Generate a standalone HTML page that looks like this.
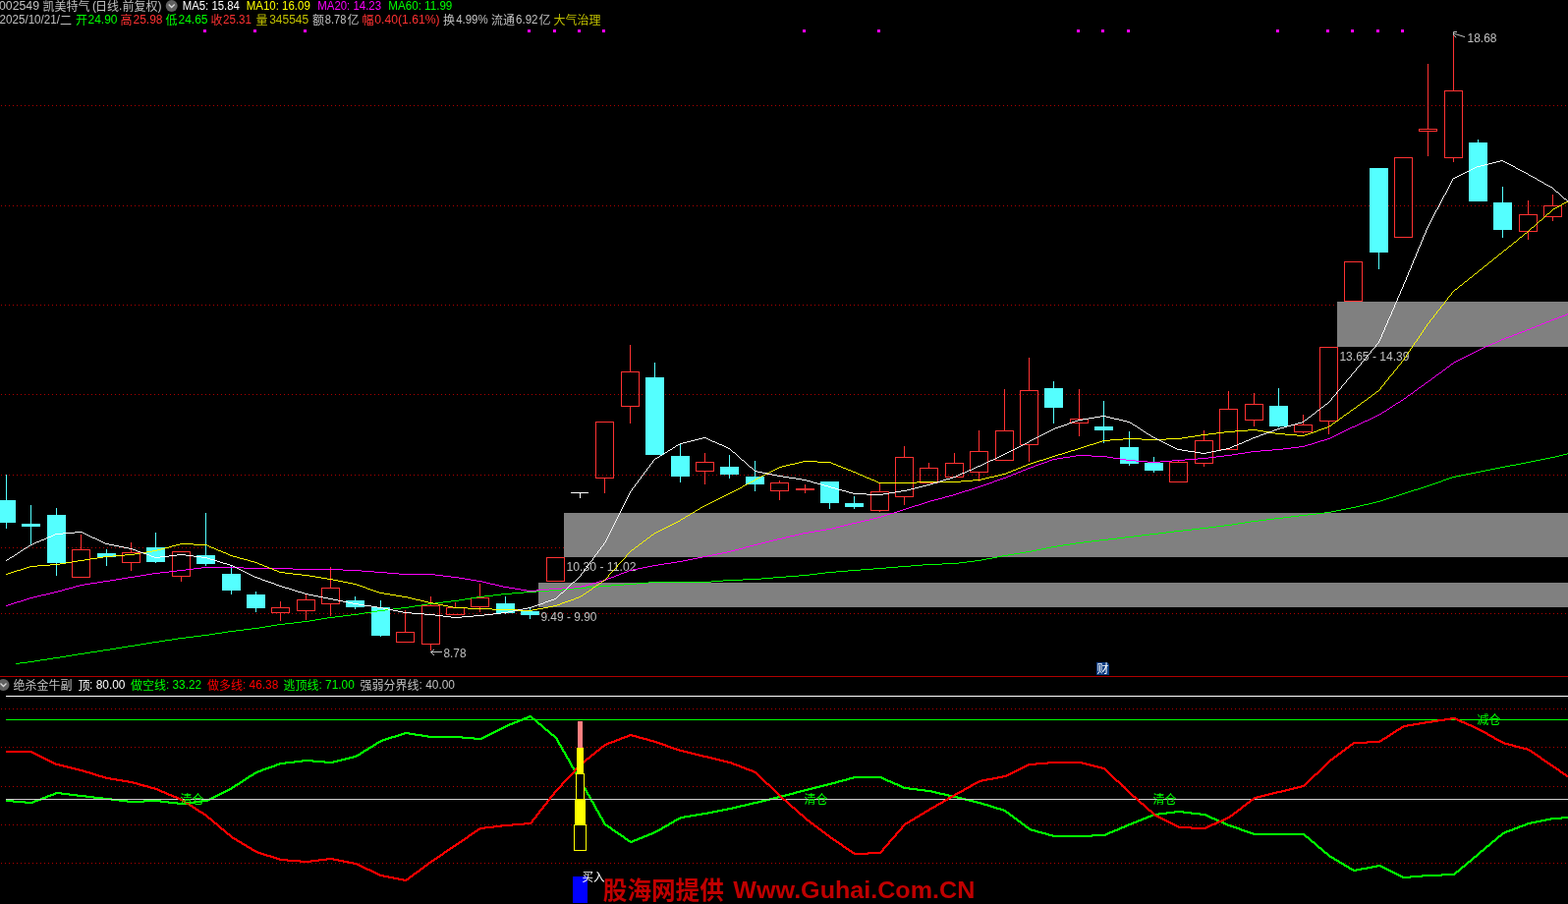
<!DOCTYPE html>
<html lang="zh"><head><meta charset="utf-8"><title>002549 凯美特气 日线</title>
<style>
html,body{margin:0;padding:0;background:#000;overflow:hidden}
body{width:1596px;height:920px;font-family:"Liberation Sans","Noto Sans CJK SC",sans-serif}
svg{display:block}
svg text{font-family:"Liberation Sans","Noto Sans CJK SC",sans-serif;white-space:pre}
</style></head><body>
<svg width="1596" height="920" viewBox="0 0 1596 920">
<defs><filter id="gs" x="0" y="0" width="100%" height="100%" filterUnits="userSpaceOnUse" color-interpolation-filters="sRGB"><feOffset dx="0" dy="0"/></filter></defs>
<rect width="1596" height="920" fill="#000"/>
<g shape-rendering="crispEdges"><line x1="1" y1="107.5" x2="1596" y2="107.5" stroke="#B00000" stroke-width="1" stroke-dasharray="1 3"/><line x1="1" y1="209.5" x2="1596" y2="209.5" stroke="#B00000" stroke-width="1" stroke-dasharray="1 3"/><line x1="1" y1="310.5" x2="1596" y2="310.5" stroke="#B00000" stroke-width="1" stroke-dasharray="1 3"/><line x1="1" y1="401.5" x2="1596" y2="401.5" stroke="#B00000" stroke-width="1" stroke-dasharray="1 3"/><line x1="1" y1="483.5" x2="1596" y2="483.5" stroke="#B00000" stroke-width="1" stroke-dasharray="1 3"/><line x1="1" y1="557.5" x2="1596" y2="557.5" stroke="#B00000" stroke-width="1" stroke-dasharray="1 3"/><line x1="1" y1="624.5" x2="1596" y2="624.5" stroke="#B00000" stroke-width="1" stroke-dasharray="1 3"/><line x1="1" y1="721.5" x2="1596" y2="721.5" stroke="#B00000" stroke-width="1" stroke-dasharray="1 3"/><line x1="1" y1="760.5" x2="1596" y2="760.5" stroke="#B00000" stroke-width="1" stroke-dasharray="1 3"/><line x1="1" y1="800.5" x2="1596" y2="800.5" stroke="#B00000" stroke-width="1" stroke-dasharray="1 3"/><line x1="1" y1="839.5" x2="1596" y2="839.5" stroke="#B00000" stroke-width="1" stroke-dasharray="1 3"/><line x1="1" y1="878.5" x2="1596" y2="878.5" stroke="#B00000" stroke-width="1" stroke-dasharray="1 3"/><rect x="0" y="688" width="1596" height="1" fill="#B00000"/><rect x="6" y="708" width="1590" height="1" fill="#FFFFFF"/><rect x="574" y="522" width="1022" height="45" fill="#808080"/><rect x="548" y="593" width="1048" height="25" fill="#808080"/><rect x="1361" y="307" width="235" height="46" fill="#808080"/><rect x="207" y="30" width="3" height="3" fill="#FF00FF"/><rect x="258" y="30" width="3" height="3" fill="#FF00FF"/><rect x="309" y="30" width="3" height="3" fill="#FF00FF"/><rect x="537" y="30" width="3" height="3" fill="#FF00FF"/><rect x="563" y="30" width="3" height="3" fill="#FF00FF"/><rect x="588" y="30" width="3" height="3" fill="#FF00FF"/><rect x="613" y="30" width="3" height="3" fill="#FF00FF"/><rect x="817" y="30" width="3" height="3" fill="#FF00FF"/><rect x="893" y="30" width="3" height="3" fill="#FF00FF"/><rect x="1096" y="30" width="3" height="3" fill="#FF00FF"/><rect x="1121" y="30" width="3" height="3" fill="#FF00FF"/><rect x="1147" y="30" width="3" height="3" fill="#FF00FF"/><rect x="1299" y="30" width="3" height="3" fill="#FF00FF"/><rect x="1350" y="30" width="3" height="3" fill="#FF00FF"/><rect x="1375" y="30" width="3" height="3" fill="#FF00FF"/><rect x="1401" y="30" width="3" height="3" fill="#FF00FF"/><rect x="1426" y="30" width="3" height="3" fill="#FF00FF"/><rect x="-3" y="509" width="19" height="23" fill="#54FFFF"/><rect x="6" y="483" width="1" height="55" fill="#54FFFF"/><rect x="22" y="533" width="19" height="3" fill="#54FFFF"/><rect x="31" y="514" width="1" height="40" fill="#54FFFF"/><rect x="48" y="524" width="19" height="49" fill="#54FFFF"/><rect x="57" y="517" width="1" height="69" fill="#54FFFF"/><rect x="73.5" y="559.5" width="18" height="28" fill="none" stroke="#FF3232" stroke-width="1"/><rect x="82" y="544" width="1" height="15" fill="#FF3232"/><rect x="99" y="563" width="19" height="4" fill="#54FFFF"/><rect x="108" y="559" width="1" height="17" fill="#54FFFF"/><rect x="124.5" y="562.5" width="18" height="10" fill="none" stroke="#FF3232" stroke-width="1"/><rect x="133" y="552" width="1" height="10" fill="#FF3232"/><rect x="133" y="573" width="1" height="8" fill="#FF3232"/><rect x="149" y="557" width="19" height="15" fill="#54FFFF"/><rect x="158" y="542" width="1" height="31" fill="#54FFFF"/><rect x="175.5" y="561.5" width="18" height="25" fill="none" stroke="#FF3232" stroke-width="1"/><rect x="184" y="587" width="1" height="5" fill="#FF3232"/><rect x="200" y="565" width="19" height="9" fill="#54FFFF"/><rect x="209" y="522" width="1" height="54" fill="#54FFFF"/><rect x="226" y="584" width="19" height="17" fill="#54FFFF"/><rect x="235" y="575" width="1" height="30" fill="#54FFFF"/><rect x="251" y="605" width="19" height="14" fill="#54FFFF"/><rect x="260" y="602" width="1" height="21" fill="#54FFFF"/><rect x="276.5" y="618.5" width="18" height="5" fill="none" stroke="#FF3232" stroke-width="1"/><rect x="285" y="612" width="1" height="6" fill="#FF3232"/><rect x="285" y="624" width="1" height="8" fill="#FF3232"/><rect x="302.5" y="610.5" width="18" height="11" fill="none" stroke="#FF3232" stroke-width="1"/><rect x="311" y="604" width="1" height="6" fill="#FF3232"/><rect x="311" y="622" width="1" height="9" fill="#FF3232"/><rect x="327.5" y="598.5" width="18" height="16" fill="none" stroke="#FF3232" stroke-width="1"/><rect x="336" y="577" width="1" height="21" fill="#FF3232"/><rect x="336" y="615" width="1" height="12" fill="#FF3232"/><rect x="352" y="611" width="19" height="7" fill="#54FFFF"/><rect x="361" y="607" width="1" height="13" fill="#54FFFF"/><rect x="378" y="618" width="19" height="29" fill="#54FFFF"/><rect x="387" y="611" width="1" height="37" fill="#54FFFF"/><rect x="403.5" y="643.5" width="18" height="10" fill="none" stroke="#FF3232" stroke-width="1"/><rect x="412" y="621" width="1" height="22" fill="#FF3232"/><rect x="429.5" y="616.5" width="18" height="39" fill="none" stroke="#FF3232" stroke-width="1"/><rect x="438" y="607" width="1" height="9" fill="#FF3232"/><rect x="438" y="656" width="1" height="6" fill="#FF3232"/><rect x="454.5" y="618.5" width="18" height="7" fill="none" stroke="#FF3232" stroke-width="1"/><rect x="463" y="613" width="1" height="5" fill="#FF3232"/><rect x="479.5" y="608.5" width="18" height="9" fill="none" stroke="#FF3232" stroke-width="1"/><rect x="488" y="594" width="1" height="14" fill="#FF3232"/><rect x="488" y="618" width="1" height="5" fill="#FF3232"/><rect x="505" y="614" width="19" height="10" fill="#54FFFF"/><rect x="514" y="607" width="1" height="18" fill="#54FFFF"/><rect x="530" y="622" width="19" height="4" fill="#54FFFF"/><rect x="539" y="618" width="1" height="12" fill="#54FFFF"/><rect x="556.5" y="567.5" width="18" height="24" fill="none" stroke="#FF3232" stroke-width="1"/><rect x="581" y="501" width="18" height="1" fill="#FFFFFF"/><rect x="590" y="501" width="1" height="6" fill="#FFFFFF"/><rect x="606.5" y="429.5" width="18" height="57" fill="none" stroke="#FF3232" stroke-width="1"/><rect x="615" y="487" width="1" height="15" fill="#FF3232"/><rect x="632.5" y="378.5" width="18" height="35" fill="none" stroke="#FF3232" stroke-width="1"/><rect x="641" y="351" width="1" height="27" fill="#FF3232"/><rect x="641" y="414" width="1" height="17" fill="#FF3232"/><rect x="657" y="384" width="19" height="79" fill="#54FFFF"/><rect x="666" y="369" width="1" height="94" fill="#54FFFF"/><rect x="683" y="464" width="19" height="21" fill="#54FFFF"/><rect x="692" y="452" width="1" height="39" fill="#54FFFF"/><rect x="708.5" y="470.5" width="18" height="9" fill="none" stroke="#FF3232" stroke-width="1"/><rect x="717" y="461" width="1" height="9" fill="#FF3232"/><rect x="717" y="480" width="1" height="13" fill="#FF3232"/><rect x="733" y="475" width="19" height="8" fill="#54FFFF"/><rect x="742" y="463" width="1" height="24" fill="#54FFFF"/><rect x="759" y="485" width="19" height="8" fill="#54FFFF"/><rect x="768" y="469" width="1" height="31" fill="#54FFFF"/><rect x="784.5" y="491.5" width="18" height="8" fill="none" stroke="#FF3232" stroke-width="1"/><rect x="793" y="489" width="1" height="2" fill="#FF3232"/><rect x="793" y="500" width="1" height="9" fill="#FF3232"/><rect x="810" y="497" width="19" height="2" fill="#FF3232"/><rect x="819" y="493" width="1" height="9" fill="#FF3232"/><rect x="835" y="490" width="19" height="22" fill="#54FFFF"/><rect x="844" y="490" width="1" height="28" fill="#54FFFF"/><rect x="860" y="512" width="19" height="4" fill="#54FFFF"/><rect x="869" y="505" width="1" height="13" fill="#54FFFF"/><rect x="886.5" y="500.5" width="18" height="19" fill="none" stroke="#FF3232" stroke-width="1"/><rect x="895" y="492" width="1" height="8" fill="#FF3232"/><rect x="895" y="520" width="1" height="1" fill="#FF3232"/><rect x="911.5" y="465.5" width="18" height="40" fill="none" stroke="#FF3232" stroke-width="1"/><rect x="920" y="454" width="1" height="11" fill="#FF3232"/><rect x="920" y="506" width="1" height="8" fill="#FF3232"/><rect x="936.5" y="476.5" width="18" height="15" fill="none" stroke="#FF3232" stroke-width="1"/><rect x="945" y="471" width="1" height="5" fill="#FF3232"/><rect x="962.5" y="471.5" width="18" height="14" fill="none" stroke="#FF3232" stroke-width="1"/><rect x="971" y="461" width="1" height="10" fill="#FF3232"/><rect x="987.5" y="459.5" width="18" height="21" fill="none" stroke="#FF3232" stroke-width="1"/><rect x="996" y="438" width="1" height="21" fill="#FF3232"/><rect x="996" y="481" width="1" height="9" fill="#FF3232"/><rect x="1013.5" y="438.5" width="18" height="30" fill="none" stroke="#FF3232" stroke-width="1"/><rect x="1022" y="396" width="1" height="42" fill="#FF3232"/><rect x="1038.5" y="397.5" width="18" height="55" fill="none" stroke="#FF3232" stroke-width="1"/><rect x="1047" y="364" width="1" height="33" fill="#FF3232"/><rect x="1047" y="453" width="1" height="17" fill="#FF3232"/><rect x="1063" y="395" width="19" height="20" fill="#54FFFF"/><rect x="1072" y="388" width="1" height="43" fill="#54FFFF"/><rect x="1089.5" y="426.5" width="18" height="4" fill="none" stroke="#FF3232" stroke-width="1"/><rect x="1098" y="396" width="1" height="30" fill="#FF3232"/><rect x="1098" y="431" width="1" height="13" fill="#FF3232"/><rect x="1114" y="434" width="19" height="4" fill="#54FFFF"/><rect x="1123" y="408" width="1" height="43" fill="#54FFFF"/><rect x="1140" y="455" width="19" height="17" fill="#54FFFF"/><rect x="1149" y="439" width="1" height="35" fill="#54FFFF"/><rect x="1165" y="471" width="19" height="8" fill="#54FFFF"/><rect x="1174" y="465" width="1" height="16" fill="#54FFFF"/><rect x="1190.5" y="470.5" width="18" height="20" fill="none" stroke="#FF3232" stroke-width="1"/><rect x="1199" y="469" width="1" height="1" fill="#FF3232"/><rect x="1216.5" y="448.5" width="18" height="23" fill="none" stroke="#FF3232" stroke-width="1"/><rect x="1225" y="438" width="1" height="10" fill="#FF3232"/><rect x="1225" y="472" width="1" height="3" fill="#FF3232"/><rect x="1241.5" y="416.5" width="18" height="41" fill="none" stroke="#FF3232" stroke-width="1"/><rect x="1250" y="398" width="1" height="18" fill="#FF3232"/><rect x="1267.5" y="411.5" width="18" height="16" fill="none" stroke="#FF3232" stroke-width="1"/><rect x="1276" y="400" width="1" height="11" fill="#FF3232"/><rect x="1276" y="428" width="1" height="6" fill="#FF3232"/><rect x="1292" y="413" width="19" height="21" fill="#54FFFF"/><rect x="1301" y="395" width="1" height="40" fill="#54FFFF"/><rect x="1317.5" y="432.5" width="18" height="7" fill="none" stroke="#FF3232" stroke-width="1"/><rect x="1326" y="422" width="1" height="10" fill="#FF3232"/><rect x="1326" y="440" width="1" height="1" fill="#FF3232"/><rect x="1343.5" y="353.5" width="18" height="75" fill="none" stroke="#FF3232" stroke-width="1"/><rect x="1352" y="429" width="1" height="13" fill="#FF3232"/><rect x="1368.5" y="266.5" width="18" height="40" fill="none" stroke="#FF3232" stroke-width="1"/><rect x="1394" y="171" width="19" height="86" fill="#54FFFF"/><rect x="1403" y="171" width="1" height="103" fill="#54FFFF"/><rect x="1419.5" y="160.5" width="18" height="81" fill="none" stroke="#FF3232" stroke-width="1"/><rect x="1444.5" y="131.5" width="18" height="2" fill="none" stroke="#FF3232" stroke-width="1"/><rect x="1453" y="65" width="1" height="66" fill="#FF3232"/><rect x="1453" y="134" width="1" height="25" fill="#FF3232"/><rect x="1470.5" y="92.5" width="18" height="68" fill="none" stroke="#FF3232" stroke-width="1"/><rect x="1479" y="36" width="1" height="56" fill="#FF3232"/><rect x="1479" y="161" width="1" height="4" fill="#FF3232"/><rect x="1495" y="145" width="19" height="60" fill="#54FFFF"/><rect x="1504" y="142" width="1" height="63" fill="#54FFFF"/><rect x="1520" y="206" width="19" height="28" fill="#54FFFF"/><rect x="1529" y="190" width="1" height="52" fill="#54FFFF"/><rect x="1546.5" y="218.5" width="18" height="17" fill="none" stroke="#FF3232" stroke-width="1"/><rect x="1555" y="204" width="1" height="14" fill="#FF3232"/><rect x="1555" y="236" width="1" height="8" fill="#FF3232"/><rect x="1571.5" y="209.5" width="18" height="11" fill="none" stroke="#FF3232" stroke-width="1"/><rect x="1580" y="198" width="1" height="11" fill="#FF3232"/><rect x="1580" y="221" width="1" height="4" fill="#FF3232"/></g>
<g filter="url(#gs)"><text x="576.5" y="581" fill="#C0C0C0" font-size="12" textLength="71" lengthAdjust="spacingAndGlyphs">10.30 - 11.02</text><text x="550.4" y="632" fill="#C0C0C0" font-size="12" textLength="57" lengthAdjust="spacingAndGlyphs">9.49 - 9.90</text><text x="1363.4" y="367" fill="#C0C0C0" font-size="12" textLength="71" lengthAdjust="spacingAndGlyphs">13.65 - 14.39</text><text x="451.5" y="669" fill="#C0C0C0" font-size="12" textLength="23" lengthAdjust="spacingAndGlyphs">8.78</text><text x="1493.5" y="43" fill="#C0C0C0" font-size="12" textLength="30" lengthAdjust="spacingAndGlyphs">18.68</text><path d="M438.5 663.5h11.5M438.5 663.5l3.5-2.5M438.5 663.5l3.5 3.5" stroke="#C0C0C0" fill="none" stroke-width="1"/><path d="M1479.5 36v-3.5h3.5M1480 34.2l11 3.4M1480 36l2.2 2.2" stroke="#C0C0C0" fill="none" stroke-width="1"/></g>
<g shape-rendering="crispEdges"><path d="M16 675.5h4M20 674.5h8M28 673.5h4M31 673.5h4M35 672.5h6M41 671.5h7M48 670.5h6M54 669.5h4M57 669.5h4M61 668.5h6M67 667.5h6M73 666.5h6M79 665.5h4M82 665.5h4M86 664.5h6M92 663.5h7M99 662.5h6M105 661.5h4M108 661.5h4M112 660.5h6M118 659.5h6M124 658.5h6M130 657.5h4M133 657.5h4M137 656.5h6M143 655.5h6M149 654.5h6M155 653.5h4M158 653.5h4M162 652.5h6M168 651.5h7M175 650.5h6M181 649.5h4M184 649.5h5M189 648.5h8M197 647.5h8M205 646.5h5M209 646.5h4M213 645.5h6M219 644.5h7M226 643.5h6M232 642.5h4M235 642.5h5M240 641.5h8M248 640.5h8M256 639.5h5M260 639.5h4M264 638.5h6M270 637.5h6M276 636.5h6M282 635.5h4M285 635.5h5M290 634.5h9M299 633.5h8M307 632.5h5M311 632.5h4M315 631.5h6M321 630.5h6M327 629.5h6M333 628.5h4M336 628.5h5M341 627.5h8M349 626.5h8M357 625.5h5M361 625.5h4M365 624.5h6M371 623.5h7M378 622.5h6M384 621.5h4M387 621.5h5M392 620.5h8M400 619.5h8M408 618.5h5M412 618.5h4M416 617.5h6M422 616.5h7M429 615.5h6M435 614.5h4M438 614.5h5M443 613.5h8M451 612.5h8M459 611.5h5M463 611.5h4M467 610.5h6M473 609.5h6M479 608.5h6M485 607.5h4M488 607.5h5M493 606.5h9M502 605.5h8M510 604.5h5M514 604.5h7M521 603.5h12M533 602.5h7M539 602.5h7M546 601.5h13M559 600.5h7M565 600.5h7M572 599.5h12M584 598.5h7M590 598.5h7M597 597.5h12M609 596.5h7M615 596.5h7M622 595.5h13M635 594.5h7M641 594.5h7M648 593.5h12M660 592.5h7M666 592.5h27M692 592.5h26M717 592.5h7M724 591.5h12M736 590.5h7M742 590.5h14M756 589.5h13M768 589.5h7M775 588.5h12M787 587.5h7M793 587.5h7M800 586.5h13M813 585.5h7M819 585.5h5M824 584.5h8M832 583.5h8M840 582.5h5M844 582.5h7M851 581.5h12M863 580.5h7M869 580.5h7M876 579.5h13M889 578.5h7M895 578.5h7M902 577.5h12M914 576.5h7M920 576.5h7M927 575.5h12M939 574.5h7M945 574.5h14M959 573.5h13M971 573.5h5M976 572.5h8M984 571.5h8M992 570.5h5M996 570.5h3M999 569.5h5M1004 568.5h6M1010 567.5h5M1015 566.5h5M1020 565.5h3M1022 565.5h4M1026 564.5h6M1032 563.5h6M1038 562.5h6M1044 561.5h4M1047 561.5h3M1050 560.5h5M1055 559.5h5M1060 558.5h5M1065 557.5h5M1070 556.5h3M1072 556.5h4M1076 555.5h6M1082 554.5h7M1089 553.5h6M1095 552.5h4M1098 552.5h5M1103 551.5h8M1111 550.5h8M1119 549.5h5M1123 549.5h5M1128 548.5h9M1137 547.5h8M1145 546.5h5M1149 546.5h5M1154 545.5h8M1162 544.5h8M1170 543.5h5M1174 543.5h5M1179 542.5h8M1187 541.5h8M1195 540.5h5M1199 540.5h5M1204 539.5h9M1213 538.5h8M1221 537.5h5M1225 537.5h5M1230 536.5h8M1238 535.5h8M1246 534.5h5M1250 534.5h4M1254 533.5h6M1260 532.5h7M1267 531.5h6M1273 530.5h4M1276 530.5h5M1281 529.5h8M1289 528.5h8M1297 527.5h5M1301 527.5h5M1306 526.5h8M1314 525.5h8M1322 524.5h5M1326 524.5h5M1331 523.5h9M1340 522.5h8M1348 521.5h5M1352 521.5h3M1355 520.5h5M1360 519.5h5M1365 518.5h5M1370 517.5h5M1375 516.5h3M1377 516.5h3M1380 515.5h4M1384 514.5h4M1388 513.5h5M1393 512.5h4M1397 511.5h4M1401 510.5h3M1403 510.5h2M1405 509.5h3M1408 508.5h3M1411 507.5h3M1414 506.5h4M1418 505.5h3M1421 504.5h3M1424 503.5h3M1427 502.5h2M1428 502.5h2M1430 501.5h3M1433 500.5h3M1436 499.5h3M1439 498.5h4M1443 497.5h3M1446 496.5h3M1449 495.5h3M1452 494.5h2M1453 494.5h2M1455 493.5h3M1458 492.5h3M1461 491.5h3M1464 490.5h3M1467 489.5h2M1469 488.5h3M1472 487.5h3M1475 486.5h3M1478 485.5h2M1479 485.5h3M1482 484.5h5M1487 483.5h5M1492 482.5h5M1497 481.5h5M1502 480.5h3M1504 480.5h3M1507 479.5h5M1512 478.5h5M1517 477.5h5M1522 476.5h5M1527 475.5h3M1529 475.5h3M1532 474.5h5M1537 473.5h6M1543 472.5h5M1548 471.5h5M1553 470.5h3M1555 470.5h3M1558 469.5h5M1563 468.5h5M1568 467.5h5M1573 466.5h5M1578 465.5h3M1580 465.5h3M1583 464.5h4M1587 463.5h4M1591 462.5h4M1595 461.5h2" fill="none" stroke="#00FF00" stroke-width="1"/><path d="M6 616.5h2M8 615.5h3M11 614.5h3M14 613.5h3M17 612.5h4M21 611.5h3M24 610.5h3M27 609.5h3M30 608.5h2M31 608.5h3M34 607.5h4M38 606.5h4M42 605.5h5M47 604.5h4M51 603.5h4M55 602.5h3M57 602.5h2M59 601.5h4M63 600.5h3M66 599.5h4M70 598.5h4M74 597.5h3M77 596.5h4M81 595.5h2M82 595.5h4M86 594.5h6M92 593.5h7M99 592.5h6M105 591.5h4M108 591.5h4M112 590.5h6M118 589.5h6M124 588.5h6M130 587.5h4M133 587.5h4M137 586.5h6M143 585.5h6M149 584.5h6M155 583.5h4M158 583.5h5M163 582.5h9M172 581.5h8M180 580.5h5M184 580.5h5M189 579.5h8M197 578.5h8M205 577.5h5M209 577.5h27M235 577.5h13M248 578.5h13M260 578.5h26M285 578.5h13M298 579.5h14M311 579.5h26M336 579.5h13M349 580.5h13M361 580.5h7M368 581.5h13M381 582.5h7M387 582.5h7M394 583.5h12M406 584.5h7M412 584.5h27M438 584.5h5M443 585.5h8M451 586.5h8M459 587.5h5M463 587.5h4M467 588.5h6M473 589.5h6M479 590.5h6M485 591.5h4M488 591.5h3M491 592.5h4M495 593.5h4M499 594.5h5M504 595.5h4M508 596.5h4M512 597.5h3M514 597.5h4M518 598.5h6M524 599.5h6M530 600.5h6M536 601.5h4M539 601.5h7M546 600.5h13M559 599.5h7M565 599.5h7M572 598.5h12M584 597.5h7M590 597.5h2M592 596.5h4M596 595.5h3M599 594.5h4M603 593.5h4M607 592.5h3M610 591.5h4M614 590.5h2M615 590.5h2M617 589.5h2M619 588.5h3M622 587.5h3M625 586.5h2M627 585.5h3M630 584.5h2M632 583.5h3M635 582.5h3M638 581.5h2M640 580.5h2M641 580.5h3M644 579.5h5M649 578.5h5M654 577.5h5M659 576.5h5M664 575.5h3M666 575.5h4M670 574.5h6M676 573.5h7M683 572.5h6M689 571.5h4M692 571.5h3M695 570.5h5M700 569.5h5M705 568.5h5M710 567.5h5M715 566.5h3M717 566.5h3M720 565.5h5M725 564.5h5M730 563.5h5M735 562.5h5M740 561.5h3M742 561.5h2M744 560.5h4M748 559.5h4M752 558.5h4M756 557.5h3M759 556.5h4M763 555.5h4M767 554.5h2M768 554.5h3M771 553.5h4M775 552.5h4M779 551.5h4M783 550.5h4M787 549.5h4M791 548.5h3M793 548.5h3M796 547.5h4M800 546.5h4M804 545.5h5M809 544.5h4M813 543.5h4M817 542.5h3M819 542.5h4M823 541.5h6M829 540.5h6M835 539.5h6M841 538.5h4M844 538.5h3M847 537.5h4M851 536.5h4M855 535.5h4M859 534.5h4M863 533.5h4M867 532.5h3M869 532.5h3M872 531.5h4M876 530.5h4M880 529.5h5M885 528.5h4M889 527.5h4M893 526.5h3M895 526.5h2M897 525.5h3M900 524.5h3M903 523.5h3M906 522.5h4M910 521.5h3M913 520.5h3M916 519.5h3M919 518.5h2M920 518.5h2M922 517.5h3M925 516.5h3M928 515.5h3M931 514.5h4M935 513.5h3M938 512.5h3M941 511.5h3M944 510.5h2M945 510.5h2M947 509.5h4M951 508.5h4M955 507.5h4M959 506.5h3M962 505.5h4M966 504.5h4M970 503.5h2M971 503.5h2M973 502.5h3M976 501.5h3M979 500.5h3M982 499.5h4M986 498.5h3M989 497.5h3M992 496.5h3M995 495.5h2M996 495.5h2M998 494.5h3M1001 493.5h3M1004 492.5h3M1007 491.5h3M1010 490.5h2M1012 489.5h3M1015 488.5h3M1018 487.5h3M1021 486.5h2M1022 486.5h2M1024 485.5h2M1026 484.5h3M1029 483.5h2M1031 482.5h3M1034 481.5h2M1036 480.5h3M1039 479.5h2M1041 478.5h3M1044 477.5h2M1046 476.5h2M1047 476.5h2M1049 475.5h3M1052 474.5h2M1054 473.5h3M1057 472.5h3M1060 471.5h3M1063 470.5h3M1066 469.5h2M1068 468.5h3M1071 467.5h2M1072 467.5h4M1076 466.5h6M1082 465.5h7M1089 464.5h6M1095 463.5h4M1098 463.5h13M1111 464.5h13M1123 464.5h4M1127 465.5h6M1133 466.5h7M1140 467.5h6M1146 468.5h4M1149 468.5h7M1156 469.5h12M1168 470.5h7M1174 470.5h7M1181 469.5h12M1193 468.5h7M1199 468.5h7M1206 467.5h13M1219 466.5h7M1225 466.5h5M1230 465.5h8M1238 464.5h8M1246 463.5h5M1250 463.5h4M1254 462.5h6M1260 461.5h7M1267 460.5h6M1273 459.5h4M1276 459.5h7M1283 458.5h12M1295 457.5h7M1301 457.5h5M1306 456.5h8M1314 455.5h8M1322 454.5h5M1326 454.5h2M1328 453.5h3M1331 452.5h4M1335 451.5h3M1338 450.5h3M1341 449.5h3M1344 448.5h4M1348 447.5h3M1351 446.5h2M1352 446.5h2M1354 445.5h2M1356 444.5h2M1358 443.5h2M1360 442.5h2M1362 441.5h2M1364 440.5h2M1366 439.5h2M1368 438.5h2M1370 437.5h2M1372 436.5h2M1374 435.5h2M1376 434.5h2M1377 434.5h2M1379 433.5h2M1381 432.5h2M1383 431.5h2M1385 430.5h2M1387 429.5h2M1389 428.5h3M1392 427.5h2M1394 426.5h2M1396 425.5h2M1398 424.5h2M1400 423.5h2M1402 422.5h2M1403 422.5h1M1404 421.5h2M1406 420.5h1M1407 419.5h2M1409 418.5h2M1411 417.5h1M1412 416.5h2M1414 415.5h1M1415 414.5h2M1417 413.5h1M1418 412.5h2M1420 411.5h1M1421 410.5h2M1423 409.5h2M1425 408.5h1M1426 407.5h2M1428 406.5h1M1428 406.5h1M1429 405.5h2M1431 404.5h1M1432 403.5h1M1433 402.5h2M1435 401.5h1M1436 400.5h2M1438 399.5h1M1439 398.5h1M1440 397.5h2M1442 396.5h1M1443 395.5h1M1444 394.5h2M1446 393.5h1M1447 392.5h2M1449 391.5h1M1450 390.5h1M1451 389.5h2M1453 388.5h1M1453 388.5h1M1454 387.5h2M1456 386.5h1M1457 385.5h1M1458 384.5h2M1460 383.5h1M1461 382.5h1M1462 381.5h2M1464 380.5h1M1465 379.5h2M1467 378.5h1M1468 377.5h1M1469 376.5h2M1471 375.5h1M1472 374.5h1M1473 373.5h2M1475 372.5h1M1476 371.5h1M1477 370.5h2M1479 369.5h1M1479 369.5h1M1480 368.5h2M1482 367.5h2M1484 366.5h2M1486 365.5h2M1488 364.5h2M1490 363.5h2M1492 362.5h2M1494 361.5h2M1496 360.5h2M1498 359.5h2M1500 358.5h2M1502 357.5h2M1504 356.5h1M1504 356.5h2M1506 355.5h2M1508 354.5h2M1510 353.5h2M1512 352.5h3M1515 351.5h2M1517 350.5h2M1519 349.5h3M1522 348.5h2M1524 347.5h2M1526 346.5h2M1528 345.5h2M1529 345.5h2M1531 344.5h2M1533 343.5h3M1536 342.5h3M1539 341.5h2M1541 340.5h3M1544 339.5h2M1546 338.5h3M1549 337.5h3M1552 336.5h2M1554 335.5h2M1555 335.5h2M1557 334.5h2M1559 333.5h3M1562 332.5h2M1564 331.5h3M1567 330.5h2M1569 329.5h3M1572 328.5h2M1574 327.5h3M1577 326.5h2M1579 325.5h2M1580 325.5h2M1582 324.5h3M1585 323.5h2M1587 322.5h3M1590 321.5h3M1593 320.5h2M1595 319.5h2" fill="none" stroke="#FF00FF" stroke-width="1"/><path d="M6 584.5h2M8 583.5h3M11 582.5h3M14 581.5h3M17 580.5h4M21 579.5h3M24 578.5h3M27 577.5h3M30 576.5h2M31 576.5h7M38 575.5h13M51 574.5h7M57 574.5h4M61 573.5h6M67 572.5h6M73 571.5h6M79 570.5h4M82 570.5h4M86 569.5h6M92 568.5h7M99 567.5h6M105 566.5h4M108 566.5h7M115 565.5h12M127 564.5h7M133 564.5h4M137 563.5h6M143 562.5h6M149 561.5h6M155 560.5h4M158 560.5h2M160 559.5h4M164 558.5h4M168 557.5h4M172 556.5h3M175 555.5h4M179 554.5h4M183 553.5h2M184 553.5h13M197 554.5h13M209 554.5h2M211 555.5h2M213 556.5h2M215 557.5h3M218 558.5h2M220 559.5h2M222 560.5h3M225 561.5h2M227 562.5h3M230 563.5h2M232 564.5h2M234 565.5h2M235 565.5h2M237 566.5h4M241 567.5h3M244 568.5h4M248 569.5h4M252 570.5h3M255 571.5h4M259 572.5h2M260 572.5h2M262 573.5h2M264 574.5h3M267 575.5h2M269 576.5h3M272 577.5h2M274 578.5h3M277 579.5h2M279 580.5h3M282 581.5h2M284 582.5h2M285 582.5h5M290 583.5h8M298 584.5h9M307 585.5h5M311 585.5h4M315 586.5h6M321 587.5h6M327 588.5h6M333 589.5h4M336 589.5h3M339 590.5h5M344 591.5h5M349 592.5h5M354 593.5h5M359 594.5h3M361 594.5h2M363 595.5h3M366 596.5h3M369 597.5h3M372 598.5h2M374 599.5h3M377 600.5h3M380 601.5h3M383 602.5h3M386 603.5h2M387 603.5h4M391 604.5h6M397 605.5h6M403 606.5h6M409 607.5h4M412 607.5h3M415 608.5h4M419 609.5h4M423 610.5h5M428 611.5h4M432 612.5h4M436 613.5h3M438 613.5h3M441 614.5h5M446 615.5h5M451 616.5h5M456 617.5h5M461 618.5h3M463 618.5h13M476 619.5h13M488 619.5h13M501 620.5h14M514 620.5h13M527 621.5h13M539 621.5h3M542 620.5h5M547 619.5h6M553 618.5h5M558 617.5h5M563 616.5h3M565 616.5h2M567 615.5h3M570 614.5h2M572 613.5h3M575 612.5h3M578 611.5h3M581 610.5h3M584 609.5h2M586 608.5h3M589 607.5h2M590 607.5h1M591 606.5h2M593 605.5h1M594 604.5h2M596 603.5h1M597 602.5h2M599 601.5h1M600 600.5h2M602 599.5h1M603 598.5h1M604 597.5h2M606 596.5h1M607 595.5h2M609 594.5h1M610 593.5h2M612 592.5h1M613 591.5h2M615 590.5h1M615.5 590v1M616.5 589v1M617.5 588v1M618.5 587v1M619.5 585v2M620.5 584v1M621.5 583v1M622.5 582v1M623.5 581v1M624.5 580v1M625.5 579v1M626.5 578v1M627.5 577v1M628.5 575v2M629.5 574v1M630.5 573v1M631.5 572v1M632.5 571v1M633.5 570v1M634.5 569v1M635.5 568v1M636.5 567v1M637.5 565v2M638.5 564v1M639.5 563v1M640.5 562v1M641.5 561v1M641 561.5h1M642 560.5h1M643 559.5h2M645 558.5h1M646 557.5h1M647 556.5h2M649 555.5h1M650 554.5h1M651 553.5h2M653 552.5h1M654 551.5h1M655 550.5h2M657 549.5h1M658 548.5h1M659 547.5h2M661 546.5h1M662 545.5h1M663 544.5h2M665 543.5h1M666 542.5h1M666 542.5h2M668 541.5h2M670 540.5h2M672 539.5h2M674 538.5h2M676 537.5h2M678 536.5h2M680 535.5h2M682 534.5h2M684 533.5h2M686 532.5h2M688 531.5h2M690 530.5h2M692 529.5h1M692 529.5h1M693 528.5h2M695 527.5h2M697 526.5h1M698 525.5h2M700 524.5h2M702 523.5h1M703 522.5h2M705 521.5h2M707 520.5h1M708 519.5h2M710 518.5h2M712 517.5h1M713 516.5h2M715 515.5h2M717 514.5h1M717 514.5h2M719 513.5h2M721 512.5h2M723 511.5h2M725 510.5h2M727 509.5h2M729 508.5h2M731 507.5h2M733 506.5h2M735 505.5h2M737 504.5h2M739 503.5h2M741 502.5h2M742 502.5h1M743 501.5h2M745 500.5h2M747 499.5h2M749 498.5h2M751 497.5h2M753 496.5h2M755 495.5h1M756 494.5h2M758 493.5h2M760 492.5h2M762 491.5h2M764 490.5h2M766 489.5h2M768 488.5h1M768 488.5h1M769 487.5h2M771 486.5h2M773 485.5h2M775 484.5h2M777 483.5h2M779 482.5h2M781 481.5h2M783 480.5h2M785 479.5h2M787 478.5h2M789 477.5h2M791 476.5h2M793 475.5h1M793 475.5h3M796 474.5h4M800 473.5h4M804 472.5h5M809 471.5h4M813 470.5h4M817 469.5h3M819 469.5h13M832 470.5h13M844 470.5h2M846 471.5h2M848 472.5h3M851 473.5h2M853 474.5h3M856 475.5h2M858 476.5h3M861 477.5h2M863 478.5h3M866 479.5h2M868 480.5h2M869 480.5h2M871 481.5h2M873 482.5h2M875 483.5h3M878 484.5h2M880 485.5h2M882 486.5h3M885 487.5h2M887 488.5h3M890 489.5h2M892 490.5h2M894 491.5h2M895 491.5h26M920 491.5h13M933 490.5h13M945 490.5h27M971 490.5h7M978 489.5h12M990 488.5h7M996 488.5h3M999 487.5h4M1003 486.5h4M1007 485.5h5M1012 484.5h4M1016 483.5h4M1020 482.5h3M1022 482.5h2M1024 481.5h2M1026 480.5h3M1029 479.5h2M1031 478.5h3M1034 477.5h2M1036 476.5h3M1039 475.5h2M1041 474.5h3M1044 473.5h2M1046 472.5h2M1047 472.5h2M1049 471.5h3M1052 470.5h3M1055 469.5h3M1058 468.5h4M1062 467.5h3M1065 466.5h3M1068 465.5h3M1071 464.5h2M1072 464.5h2M1074 463.5h3M1077 462.5h4M1081 461.5h3M1084 460.5h3M1087 459.5h3M1090 458.5h4M1094 457.5h3M1097 456.5h2M1098 456.5h2M1100 455.5h3M1103 454.5h3M1106 453.5h3M1109 452.5h4M1113 451.5h3M1116 450.5h3M1119 449.5h3M1122 448.5h2M1123 448.5h7M1130 447.5h13M1143 446.5h7M1149 446.5h13M1162 447.5h13M1174 447.5h13M1187 446.5h13M1199 446.5h4M1203 445.5h6M1209 444.5h7M1216 443.5h6M1222 442.5h4M1225 442.5h5M1230 441.5h8M1238 440.5h8M1246 439.5h5M1250 439.5h7M1257 438.5h13M1270 437.5h7M1276 437.5h4M1280 438.5h6M1286 439.5h6M1292 440.5h6M1298 441.5h4M1301 441.5h7M1308 442.5h12M1320 443.5h7M1326 443.5h2M1328 442.5h3M1331 441.5h3M1334 440.5h3M1337 439.5h3M1340 438.5h2M1342 437.5h3M1345 436.5h3M1348 435.5h3M1351 434.5h2M1352 434.5h1M1353 433.5h2M1355 432.5h1M1356 431.5h1M1357 430.5h2M1359 429.5h1M1360 428.5h2M1362 427.5h1M1363 426.5h1M1364 425.5h2M1366 424.5h1M1367 423.5h1M1368 422.5h2M1370 421.5h1M1371 420.5h2M1373 419.5h1M1374 418.5h1M1375 417.5h2M1377 416.5h1M1377 416.5h1M1378 415.5h2M1380 414.5h1M1381 413.5h1M1382 412.5h2M1384 411.5h1M1385 410.5h1M1386 409.5h2M1388 408.5h1M1389 407.5h2M1391 406.5h1M1392 405.5h1M1393 404.5h2M1395 403.5h1M1396 402.5h1M1397 401.5h2M1399 400.5h1M1400 399.5h1M1401 398.5h2M1403 397.5h1M1403.5 397v1M1404.5 396v1M1405.5 394v2M1406.5 393v1M1407.5 392v1M1408.5 391v1M1409.5 389v2M1410.5 388v1M1411.5 387v1M1412.5 386v1M1413.5 384v2M1414.5 383v1M1415.5 382v1M1416.5 381v1M1417.5 380v1M1418.5 378v2M1419.5 377v1M1420.5 376v1M1421.5 375v1M1422.5 373v2M1423.5 372v1M1424.5 371v1M1425.5 370v1M1426.5 368v2M1427.5 367v1M1428.5 366v1M1428.5 366v1M1429.5 364v2M1430.5 363v1M1431.5 361v2M1432.5 360v1M1433.5 358v2M1434.5 357v1M1435.5 355v2M1436.5 354v1M1437.5 352v2M1438.5 351v1M1439.5 349v2M1440.5 348v1M1441.5 347v1M1442.5 345v2M1443.5 344v1M1444.5 342v2M1445.5 341v1M1446.5 339v2M1447.5 338v1M1448.5 336v2M1449.5 335v1M1450.5 333v2M1451.5 332v1M1452.5 330v2M1453.5 329v1M1453.5 329v1M1454.5 328v1M1455.5 326v2M1456.5 325v1M1457.5 324v1M1458.5 323v1M1459.5 321v2M1460.5 320v1M1461.5 319v1M1462.5 317v2M1463.5 316v1M1464.5 315v1M1465.5 314v1M1466.5 312v2M1467.5 311v1M1468.5 310v1M1469.5 309v1M1470.5 307v2M1471.5 306v1M1472.5 305v1M1473.5 303v2M1474.5 302v1M1475.5 301v1M1476.5 300v1M1477.5 298v2M1478.5 297v1M1479.5 296v1M1479 296.5h1M1480 295.5h1M1481 294.5h2M1483 293.5h1M1484 292.5h1M1485 291.5h1M1486 290.5h2M1488 289.5h1M1489 288.5h1M1490 287.5h1M1491 286.5h2M1493 285.5h1M1494 284.5h1M1495 283.5h1M1496 282.5h2M1498 281.5h1M1499 280.5h1M1500 279.5h1M1501 278.5h2M1503 277.5h1M1504 276.5h1M1504 276.5h1M1505 275.5h1M1506 274.5h2M1508 273.5h1M1509 272.5h1M1510 271.5h1M1511 270.5h2M1513 269.5h1M1514 268.5h1M1515 267.5h1M1516 266.5h2M1518 265.5h1M1519 264.5h1M1520 263.5h1M1521 262.5h2M1523 261.5h1M1524 260.5h1M1525 259.5h1M1526 258.5h2M1528 257.5h1M1529 256.5h1M1529 256.5h1M1530 255.5h1M1531 254.5h2M1533 253.5h1M1534 252.5h1M1535 251.5h1M1536 250.5h2M1538 249.5h1M1539 248.5h1M1540 247.5h1M1541 246.5h2M1543 245.5h1M1544 244.5h1M1545 243.5h1M1546 242.5h1M1547 241.5h2M1549 240.5h1M1550 239.5h1M1551 238.5h1M1552 237.5h2M1554 236.5h1M1555 235.5h1M1555 235.5h1M1556 234.5h1M1557 233.5h1M1558 232.5h1M1559 231.5h2M1561 230.5h1M1562 229.5h1M1563 228.5h1M1564 227.5h1M1565 226.5h1M1566 225.5h1M1567 224.5h2M1569 223.5h1M1570 222.5h1M1571 221.5h1M1572 220.5h1M1573 219.5h1M1574 218.5h1M1575 217.5h2M1577 216.5h1M1578 215.5h1M1579 214.5h1M1580 213.5h1M1580 213.5h1M1581 212.5h2M1583 211.5h2M1585 210.5h2M1587 209.5h2M1589 208.5h1M1590 207.5h2M1592 206.5h2M1594 205.5h2M1596 204.5h1" fill="none" stroke="#FFFF00" stroke-width="1"/><path d="M6 570.5h1M7 569.5h2M9 568.5h1M10 567.5h2M12 566.5h2M14 565.5h1M15 564.5h2M17 563.5h1M18 562.5h2M20 561.5h1M21 560.5h2M23 559.5h1M24 558.5h2M26 557.5h2M28 556.5h1M29 555.5h2M31 554.5h1M31 554.5h2M33 553.5h2M35 552.5h2M37 551.5h3M40 550.5h2M42 549.5h3M45 548.5h2M47 547.5h2M49 546.5h3M52 545.5h2M54 544.5h2M56 543.5h2M57 543.5h7M64 542.5h12M76 541.5h7M82 541.5h2M84 542.5h2M86 543.5h2M88 544.5h2M90 545.5h2M92 546.5h2M94 547.5h3M97 548.5h2M99 549.5h2M101 550.5h2M103 551.5h2M105 552.5h2M107 553.5h2M108 553.5h3M111 554.5h5M116 555.5h5M121 556.5h5M126 557.5h5M131 558.5h3M133 558.5h2M135 559.5h3M138 560.5h2M140 561.5h3M143 562.5h3M146 563.5h3M149 564.5h3M152 565.5h2M154 566.5h3M157 567.5h2M158 567.5h5M163 566.5h9M172 565.5h8M180 564.5h5M184 564.5h5M189 565.5h8M197 566.5h8M205 567.5h5M209 567.5h2M211 568.5h3M214 569.5h4M218 570.5h3M221 571.5h3M224 572.5h3M227 573.5h4M231 574.5h3M234 575.5h2M235 575.5h2M237 576.5h2M239 577.5h2M241 578.5h2M243 579.5h2M245 580.5h2M247 581.5h2M249 582.5h2M251 583.5h2M253 584.5h2M255 585.5h2M257 586.5h2M259 587.5h2M260 587.5h2M262 588.5h3M265 589.5h2M267 590.5h3M270 591.5h3M273 592.5h3M276 593.5h3M279 594.5h2M281 595.5h3M284 596.5h2M285 596.5h2M287 597.5h3M290 598.5h4M294 599.5h3M297 600.5h3M300 601.5h3M303 602.5h4M307 603.5h3M310 604.5h2M311 604.5h3M314 605.5h5M319 606.5h5M324 607.5h5M329 608.5h5M334 609.5h3M336 609.5h3M339 610.5h5M344 611.5h5M349 612.5h5M354 613.5h5M359 614.5h3M361 614.5h4M365 615.5h6M371 616.5h7M378 617.5h6M384 618.5h4M387 618.5h3M390 619.5h5M395 620.5h5M400 621.5h5M405 622.5h5M410 623.5h3M412 623.5h7M419 624.5h13M432 625.5h7M438 625.5h5M443 626.5h8M451 627.5h8M459 628.5h5M463 628.5h7M470 627.5h12M482 626.5h7M488 626.5h5M493 625.5h9M502 624.5h8M510 623.5h5M514 623.5h3M517 622.5h5M522 621.5h5M527 620.5h5M532 619.5h5M537 618.5h3M539 618.5h2M541 617.5h3M544 616.5h3M547 615.5h3M550 614.5h3M553 613.5h2M555 612.5h3M558 611.5h3M561 610.5h3M564 609.5h2M565 609.5h1M566 608.5h1M567 607.5h1M568 606.5h1M569 605.5h1M570 604.5h1M571 603.5h2M573 602.5h1M574 601.5h1M575 600.5h1M576 599.5h1M577 598.5h1M578 597.5h1M579 596.5h1M580 595.5h1M581 594.5h1M582 593.5h1M583 592.5h2M585 591.5h1M586 590.5h1M587 589.5h1M588 588.5h1M589 587.5h1M590 586.5h1M590.5 586v1M591.5 584v2M592.5 583v1M593.5 582v1M594.5 580v2M595.5 579v1M596.5 578v1M597.5 576v2M598.5 575v1M599.5 574v1M600.5 572v2M601.5 571v1M602.5 570v1M603.5 568v2M604.5 567v1M605.5 565v2M606.5 564v1M607.5 563v1M608.5 561v2M609.5 560v1M610.5 559v1M611.5 557v2M612.5 556v1M613.5 555v1M614.5 553v2M615.5 552v1M615.5 552v1M616.5 550v2M617.5 548v2M618.5 546v2M619.5 544v2M620.5 542v2M621.5 540v2M622.5 538v2M623.5 536v2M624.5 534v2M625.5 532v2M626.5 530v2M627.5 528v2M628.5 526v2M629.5 524v2M630.5 522v2M631.5 520v2M632.5 518v2M633.5 516v2M634.5 514v2M635.5 512v2M636.5 510v2M637.5 508v2M638.5 506v2M639.5 504v2M640.5 502v2M641.5 500v2M641.5 500v1M642.5 499v1M643.5 497v2M644.5 496v1M645.5 495v1M646.5 493v2M647.5 492v1M648.5 491v1M649.5 489v2M650.5 488v1M651.5 487v1M652.5 485v2M653.5 484v1M654.5 483v1M655.5 481v2M656.5 480v1M657.5 479v1M658.5 477v2M659.5 476v1M660.5 475v1M661.5 473v2M662.5 472v1M663.5 471v1M664.5 469v2M665.5 468v1M666.5 467v1M666 467.5h1M667 466.5h2M669 465.5h2M671 464.5h1M672 463.5h2M674 462.5h1M675 461.5h2M677 460.5h2M679 459.5h1M680 458.5h2M682 457.5h2M684 456.5h1M685 455.5h2M687 454.5h1M688 453.5h2M690 452.5h2M692 451.5h1M692 451.5h3M695 450.5h4M699 449.5h4M703 448.5h4M707 447.5h4M711 446.5h4M715 445.5h3M717 445.5h2M719 446.5h2M721 447.5h2M723 448.5h2M725 449.5h3M728 450.5h2M730 451.5h2M732 452.5h3M735 453.5h2M737 454.5h2M739 455.5h2M741 456.5h2M742 456.5h1M743 457.5h1M744 458.5h1M745 459.5h1M746 460.5h2M748 461.5h1M749 462.5h1M750 463.5h1M751 464.5h1M752 465.5h1M753 466.5h1M754 467.5h1M755 468.5h2M757 469.5h1M758 470.5h1M759 471.5h1M760 472.5h1M761 473.5h1M762 474.5h1M763 475.5h2M765 476.5h1M766 477.5h1M767 478.5h1M768 479.5h1M768 479.5h3M771 480.5h5M776 481.5h5M781 482.5h5M786 483.5h5M791 484.5h3M793 484.5h4M797 485.5h6M803 486.5h7M810 487.5h6M816 488.5h4M819 488.5h2M821 489.5h4M825 490.5h3M828 491.5h4M832 492.5h4M836 493.5h3M839 494.5h4M843 495.5h2M844 495.5h2M846 496.5h4M850 497.5h3M853 498.5h4M857 499.5h4M861 500.5h3M864 501.5h4M868 502.5h2M869 502.5h13M882 503.5h14M895 503.5h4M899 502.5h6M905 501.5h6M911 500.5h6M917 499.5h4M920 499.5h3M923 498.5h4M927 497.5h4M931 496.5h4M935 495.5h4M939 494.5h4M943 493.5h3M945 493.5h2M947 492.5h3M950 491.5h4M954 490.5h3M957 489.5h3M960 488.5h3M963 487.5h4M967 486.5h3M970 485.5h2M971 485.5h2M973 484.5h2M975 483.5h2M977 482.5h2M979 481.5h3M982 480.5h2M984 479.5h2M986 478.5h3M989 477.5h2M991 476.5h2M993 475.5h2M995 474.5h2M996 474.5h2M998 473.5h2M1000 472.5h2M1002 471.5h2M1004 470.5h2M1006 469.5h2M1008 468.5h3M1011 467.5h2M1013 466.5h2M1015 465.5h2M1017 464.5h2M1019 463.5h2M1021 462.5h2M1022 462.5h1M1023 461.5h2M1025 460.5h2M1027 459.5h2M1029 458.5h2M1031 457.5h2M1033 456.5h2M1035 455.5h2M1037 454.5h2M1039 453.5h2M1041 452.5h2M1043 451.5h2M1045 450.5h2M1047 449.5h1M1047 449.5h1M1048 448.5h2M1050 447.5h2M1052 446.5h2M1054 445.5h2M1056 444.5h2M1058 443.5h2M1060 442.5h2M1062 441.5h2M1064 440.5h2M1066 439.5h2M1068 438.5h2M1070 437.5h2M1072 436.5h1M1072 436.5h2M1074 435.5h3M1077 434.5h3M1080 433.5h3M1083 432.5h3M1086 431.5h2M1088 430.5h3M1091 429.5h3M1094 428.5h3M1097 427.5h2M1098 427.5h4M1102 426.5h6M1108 425.5h6M1114 424.5h6M1120 423.5h4M1123 423.5h3M1126 424.5h4M1130 425.5h4M1134 426.5h5M1139 427.5h4M1143 428.5h4M1147 429.5h3M1149 429.5h1M1150 430.5h2M1152 431.5h1M1153 432.5h2M1155 433.5h2M1157 434.5h1M1158 435.5h2M1160 436.5h1M1161 437.5h2M1163 438.5h1M1164 439.5h2M1166 440.5h1M1167 441.5h2M1169 442.5h2M1171 443.5h1M1172 444.5h2M1174 445.5h1M1174 445.5h2M1176 446.5h2M1178 447.5h2M1180 448.5h2M1182 449.5h2M1184 450.5h2M1186 451.5h2M1188 452.5h2M1190 453.5h2M1192 454.5h2M1194 455.5h2M1196 456.5h2M1198 457.5h2M1199 457.5h4M1203 458.5h6M1209 459.5h7M1216 460.5h6M1222 461.5h4M1225 461.5h3M1228 460.5h5M1233 459.5h5M1238 458.5h5M1243 457.5h5M1248 456.5h3M1250 456.5h2M1252 455.5h2M1254 454.5h2M1256 453.5h3M1259 452.5h2M1261 451.5h3M1264 450.5h2M1266 449.5h2M1268 448.5h3M1271 447.5h2M1273 446.5h2M1275 445.5h2M1276 445.5h2M1278 444.5h3M1281 443.5h2M1283 442.5h3M1286 441.5h3M1289 440.5h3M1292 439.5h3M1295 438.5h2M1297 437.5h3M1300 436.5h2M1301 436.5h2M1303 435.5h4M1307 434.5h3M1310 433.5h4M1314 432.5h4M1318 431.5h3M1321 430.5h4M1325 429.5h2M1326 429.5h1M1327 428.5h1M1328 427.5h2M1330 426.5h1M1331 425.5h1M1332 424.5h2M1334 423.5h1M1335 422.5h1M1336 421.5h2M1338 420.5h1M1339 419.5h1M1340 418.5h1M1341 417.5h2M1343 416.5h1M1344 415.5h1M1345 414.5h2M1347 413.5h1M1348 412.5h1M1349 411.5h2M1351 410.5h1M1352 409.5h1M1352.5 409v1M1353.5 408v1M1354.5 407v1M1355.5 405v2M1356.5 404v1M1357.5 403v1M1358.5 402v1M1359.5 401v1M1360.5 399v2M1361.5 398v1M1362.5 397v1M1363.5 396v1M1364.5 395v1M1365.5 393v2M1366.5 392v1M1367.5 391v1M1368.5 390v1M1369.5 389v1M1370.5 387v2M1371.5 386v1M1372.5 385v1M1373.5 384v1M1374.5 383v1M1375.5 381v2M1376.5 380v1M1377.5 379v1M1377.5 379v1M1378.5 378v1M1379.5 377v1M1380.5 375v2M1381.5 374v1M1382.5 373v1M1383.5 372v1M1384.5 371v1M1385.5 369v2M1386.5 368v1M1387.5 367v1M1388.5 366v1M1389.5 365v1M1390.5 363v2M1391.5 362v1M1392.5 361v1M1393.5 360v1M1394.5 359v1M1395.5 357v2M1396.5 356v1M1397.5 355v1M1398.5 354v1M1399.5 353v1M1400.5 351v2M1401.5 350v1M1402.5 349v1M1403.5 348v1M1403.5 347v2M1404.5 345v2M1405.5 343v2M1406.5 340v3M1407.5 338v2M1408.5 336v2M1409.5 333v3M1410.5 331v2M1411.5 329v2M1412.5 326v3M1413.5 324v2M1414.5 322v2M1415.5 320v2M1416.5 317v3M1417.5 315v2M1418.5 313v2M1419.5 310v3M1420.5 308v2M1421.5 306v2M1422.5 303v3M1423.5 301v2M1424.5 299v2M1425.5 296v3M1426.5 294v2M1427.5 292v2M1428.5 290v2M1428.5 289v2M1429.5 287v2M1430.5 285v2M1431.5 282v3M1432.5 280v2M1433.5 277v3M1434.5 275v2M1435.5 273v2M1436.5 270v3M1437.5 268v2M1438.5 265v3M1439.5 263v2M1440.5 261v2M1441.5 258v3M1442.5 256v2M1443.5 253v3M1444.5 251v2M1445.5 249v2M1446.5 246v3M1447.5 244v2M1448.5 241v3M1449.5 239v2M1450.5 237v2M1451.5 234v3M1452.5 232v2M1453.5 230v2M1453.5 230v1M1454.5 228v2M1455.5 226v2M1456.5 224v2M1457.5 222v2M1458.5 220v2M1459.5 218v2M1460.5 216v2M1461.5 214v2M1462.5 213v1M1463.5 211v2M1464.5 209v2M1465.5 207v2M1466.5 205v2M1467.5 203v2M1468.5 201v2M1469.5 199v2M1470.5 198v1M1471.5 196v2M1472.5 194v2M1473.5 192v2M1474.5 190v2M1475.5 188v2M1476.5 186v2M1477.5 184v2M1478.5 182v2M1479.5 181v1M1479 181.5h2M1481 180.5h2M1483 179.5h2M1485 178.5h2M1487 177.5h2M1489 176.5h2M1491 175.5h2M1493 174.5h2M1495 173.5h2M1497 172.5h2M1499 171.5h2M1501 170.5h2M1503 169.5h2M1504 169.5h3M1507 168.5h4M1511 167.5h4M1515 166.5h4M1519 165.5h4M1523 164.5h4M1527 163.5h3M1529 163.5h1M1530 164.5h2M1532 165.5h2M1534 166.5h2M1536 167.5h2M1538 168.5h2M1540 169.5h2M1542 170.5h1M1543 171.5h2M1545 172.5h2M1547 173.5h2M1549 174.5h2M1551 175.5h2M1553 176.5h2M1555 177.5h1M1555 177.5h1M1556 178.5h2M1558 179.5h2M1560 180.5h2M1562 181.5h2M1564 182.5h1M1565 183.5h2M1567 184.5h2M1569 185.5h2M1571 186.5h1M1572 187.5h2M1574 188.5h2M1576 189.5h2M1578 190.5h2M1580 191.5h1M1580 191.5h1M1581 192.5h1M1582 193.5h1M1583 194.5h1M1584 195.5h2M1586 196.5h1M1587 197.5h1M1588 198.5h1M1589 199.5h1M1590 200.5h1M1591 201.5h1M1592 202.5h2M1594 203.5h1M1595 204.5h1M1596 205.5h1" fill="none" stroke="#FFFFFF" stroke-width="1"/><path d="M6 815h8M13 816h13M25 817h8M31 817h3M33 816h3M35 815h4M38 814h4M41 813h3M43 812h4M46 811h3M48 810h4M51 809h4M54 808h3M56 807h3M57 807h6M62 808h9M70 809h9M78 810h6M82 810h6M87 811h9M95 812h10M104 813h6M108 813h6M113 814h9M121 815h9M129 816h6M133 816h14M146 815h14M158 815h6M163 816h9M171 817h10M180 818h6M184 818h6M189 817h9M197 816h9M205 815h6M209 815h3M211 814h3M213 813h3M215 812h3M217 811h3M219 810h3M221 809h3M223 808h3M225 807h3M227 806h3M229 805h3M231 804h3M233 803h3M235 802h2M235 802h2M236 801h3M238 800h2M239 799h3M241 798h3M243 797h2M244 796h3M246 795h2M247 794h3M249 793h2M250 792h3M252 791h2M253 790h3M255 789h3M257 788h2M258 787h3M260 786h2M260 786h3M262 785h4M265 784h3M267 783h4M270 782h4M273 781h4M276 780h4M279 779h3M281 778h4M284 777h3M285 777h6M290 776h10M299 775h9M307 774h6M311 774h8M318 775h13M330 776h8M336 776h4M339 775h5M343 774h5M347 773h5M351 772h5M355 771h5M359 770h4M361 770h2M362 769h3M364 768h3M366 767h2M367 766h3M369 765h2M370 764h3M372 763h3M374 762h2M375 761h3M377 760h3M379 759h2M380 758h3M382 757h2M383 756h3M385 755h3M387 754h2M387 754h3M389 753h4M392 752h4M395 751h4M398 750h5M402 749h4M405 748h4M408 747h4M411 746h3M412 746h5M416 747h7M422 748h8M429 749h7M435 750h5M438 750h27M463 750h8M470 751h13M482 752h8M488 752h3M490 751h3M492 750h3M494 749h3M496 748h3M498 747h3M500 746h3M502 745h3M504 744h3M506 743h3M508 742h3M510 741h3M512 740h3M514 739h2M514 739h3M516 738h3M518 737h4M521 736h3M523 735h4M526 734h3M528 733h4M531 732h3M533 731h4M536 730h3M538 729h3M539 729h2M540 730h2M541 731h2M542 732h3M544 733h2M545 734h2M546 735h2M547 736h2M548 737h3M550 738h2M551 739h2M552 740h2M553 741h2M554 742h2M555 743h3M557 744h2M558 745h2M559 746h2M560 747h2M561 748h3M563 749h2M564 750h2M565 751h2M566 750v2M567 751v3M568 753v3M569 755v3M570 757v2M571 758v3M572 760v3M573 762v3M574 764v2M575 765v3M576 767v3M577 769v3M578 771v2M579 772v3M580 774v3M581 776v3M582 778v3M583 780v2M584 781v3M585 783v3M586 785v3M587 787v2M588 788v3M589 790v3M590 792v3M591 794v2M591 794v2M592 795v3M593 797v3M594 799v3M595 801v2M596 802v3M597 804v3M598 806v3M599 808v2M600 809v3M601 811v3M602 813v3M603 815v2M604 816v3M605 818v3M606 820v3M607 822v3M608 824v2M609 825v3M610 827v3M611 829v3M612 831v2M613 832v3M614 834v3M615 836v3M616 838v2M615 839h2M616 840h3M618 841h2M619 842h3M621 843h2M622 844h2M623 845h3M625 846h2M626 847h3M628 848h2M629 849h3M631 850h2M632 851h3M634 852h2M635 853h2M636 854h3M638 855h2M639 856h3M641 857h2M641 857h3M643 856h3M645 855h4M648 854h3M650 853h4M653 852h3M655 851h4M658 850h3M660 849h4M663 848h3M665 847h3M666 847h2M667 846h3M669 845h3M671 844h3M673 843h2M674 842h3M676 841h3M678 840h3M680 839h2M681 838h3M683 837h3M685 836h2M686 835h3M688 834h3M690 833h3M692 832h2M692 832h5M696 831h7M702 830h7M708 829h7M714 828h5M717 828h4M720 827h6M725 826h6M730 825h6M735 824h6M740 823h4M742 823h4M745 822h5M749 821h5M753 820h6M758 819h5M762 818h5M766 817h4M768 817h4M771 816h5M775 815h5M779 814h5M783 813h5M787 812h5M791 811h4M793 811h3M795 810h5M799 809h5M803 808h5M807 807h4M810 806h5M814 805h5M818 804h3M819 804h4M822 803h5M826 802h5M830 801h5M834 800h5M838 799h5M842 798h4M844 798h3M846 797h5M850 796h4M853 795h5M857 794h5M861 793h4M864 792h5M868 791h3M869 791h28M895 791h3M897 792h3M899 793h3M901 794h3M903 795h4M906 796h3M908 797h3M910 798h4M913 799h3M915 800h3M917 801h3M919 802h3M920 802h6M925 803h9M933 804h9M941 805h6M945 805h4M948 806h5M952 807h5M956 808h6M961 809h5M965 810h5M969 811h4M971 811h4M974 812h5M978 813h5M982 814h5M986 815h5M990 816h5M994 817h4M996 817h3M998 818h4M1001 819h5M1005 820h4M1008 821h4M1011 822h4M1014 823h5M1018 824h4M1021 825h3M1022 825h2M1023 826h2M1024 827h3M1026 828h2M1027 829h2M1028 830h3M1030 831h2M1031 832h2M1032 833h3M1034 834h2M1035 835h2M1036 836h3M1038 837h2M1039 838h2M1040 839h3M1042 840h2M1043 841h2M1044 842h3M1046 843h2M1047 844h2M1047 844h3M1049 845h5M1053 846h4M1056 847h5M1060 848h5M1064 849h4M1067 850h5M1071 851h3M1072 851h28M1098 851h14M1111 850h14M1123 850h3M1125 849h3M1127 848h3M1129 847h4M1132 846h3M1134 845h4M1137 844h3M1139 843h3M1141 842h4M1144 841h3M1146 840h3M1148 839h3M1149 839h3M1151 838h3M1153 837h4M1156 836h3M1158 835h4M1161 834h3M1163 833h4M1166 832h3M1168 831h4M1171 830h3M1173 829h3M1174 829h6M1179 828h9M1187 827h9M1195 826h6M1199 826h6M1204 827h9M1212 828h10M1221 829h6M1225 829h3M1227 830h3M1229 831h3M1231 832h3M1233 833h4M1236 834h3M1238 835h3M1240 836h4M1243 837h3M1245 838h3M1247 839h3M1249 840h3M1250 840h3M1252 841h4M1255 842h4M1258 843h4M1261 844h3M1263 845h4M1266 846h4M1269 847h4M1272 848h4M1275 849h3M1276 849h27M1301 849h27M1326 849h2M1327 850h2M1328 851h2M1329 852h3M1331 853h2M1332 854h2M1333 855h2M1334 856h2M1335 857h3M1337 858h2M1338 859h2M1339 860h2M1340 861h2M1341 862h2M1342 863h3M1344 864h2M1345 865h2M1346 866h2M1347 867h2M1348 868h3M1350 869h2M1351 870h2M1352 871h2M1352 871h2M1353 872h3M1355 873h3M1357 874h2M1358 875h3M1360 876h3M1362 877h2M1363 878h3M1365 879h3M1367 880h2M1368 881h3M1370 882h3M1372 883h2M1373 884h3M1375 885h3M1377 886h2M1377 886h4M1380 885h6M1385 884h7M1391 883h6M1396 882h6M1401 881h4M1403 881h3M1405 882h3M1407 883h3M1409 884h3M1411 885h3M1413 886h3M1415 887h3M1417 888h3M1419 889h3M1421 890h3M1423 891h3M1425 892h3M1427 893h3M1428 893h8M1435 892h13M1447 891h8M1453 891h15M1467 890h14M1479 890h2M1480 889h2M1481 888h2M1482 887h3M1484 886h2M1485 885h2M1486 884h2M1487 883h2M1488 882h3M1490 881h2M1491 880h2M1492 879h2M1493 878h2M1494 877h3M1496 876h2M1497 875h2M1498 874h2M1499 873h2M1500 872h3M1502 871h2M1503 870h2M1504 869h2M1504 869h2M1505 868h2M1506 867h2M1507 866h3M1509 865h2M1510 864h2M1511 863h2M1512 862h2M1513 861h3M1515 860h2M1516 859h2M1517 858h2M1518 857h2M1519 856h3M1521 855h2M1522 854h2M1523 853h2M1524 852h2M1525 851h3M1527 850h2M1528 849h2M1529 848h2M1529 848h3M1531 847h3M1533 846h4M1536 845h4M1539 844h3M1541 843h4M1544 842h3M1546 841h4M1549 840h4M1552 839h3M1554 838h3M1555 838h4M1558 837h6M1563 836h6M1568 835h6M1573 834h6M1578 833h4M1580 833h10M1589 832h9" fill="none" stroke="#00FF00" stroke-width="2"/><rect x="6" y="732" width="1590" height="1" fill="#00FF00"/><rect x="6" y="813" width="1590" height="1" fill="#D0D0D0"/><path d="M6 765h27M31 765h2M32 766h3M34 767h3M36 768h3M38 769h3M40 770h3M42 771h3M44 772h3M46 773h3M48 774h3M50 775h3M52 776h3M54 777h3M56 778h3M57 778h4M60 779h5M64 780h5M68 781h5M72 782h5M76 783h5M80 784h4M82 784h3M84 785h4M87 786h5M91 787h4M94 788h4M97 789h4M100 790h5M104 791h4M107 792h3M108 792h5M112 793h7M118 794h7M124 795h7M130 796h5M133 796h3M135 797h5M139 798h4M142 799h5M146 800h5M150 801h4M153 802h5M157 803h3M158 803h3M160 804h3M162 805h3M164 806h4M167 807h3M169 808h3M171 809h4M174 810h3M176 811h4M179 812h3M181 813h3M183 814h3M184 814h2M185 815h3M187 816h2M188 817h3M190 818h3M192 819h2M193 820h3M195 821h2M196 822h3M198 823h2M199 824h3M201 825h2M202 826h3M204 827h3M206 828h2M207 829h3M209 830h2M209 830h2M210 831h2M211 832h2M212 833h3M214 834h2M215 835h2M216 836h2M217 837h2M218 838h3M220 839h2M221 840h2M222 841h2M223 842h2M224 843h2M225 844h3M227 845h2M228 846h2M229 847h2M230 848h2M231 849h3M233 850h2M234 851h2M235 852h2M235 852h2M236 853h3M238 854h3M240 855h2M241 856h3M243 857h3M245 858h2M246 859h3M248 860h3M250 861h2M251 862h3M253 863h3M255 864h2M256 865h3M258 866h3M260 867h2M260 867h3M262 868h4M265 869h4M268 870h4M271 871h5M275 872h4M278 873h4M281 874h4M284 875h3M285 875h8M292 876h14M305 877h8M311 877h6M316 876h9M324 875h9M332 874h6M336 874h4M339 875h6M344 876h6M349 877h6M354 878h6M359 879h4M361 879h3M363 880h3M365 881h3M367 882h3M369 883h3M371 884h3M373 885h4M376 886h3M378 887h3M380 888h3M382 889h3M384 890h3M386 891h3M387 891h4M390 892h6M395 893h6M400 894h6M405 895h6M410 896h4M412 896h2M413 895h3M415 894h2M416 893h2M417 892h3M419 891h2M420 890h2M421 889h3M423 888h2M424 887h3M426 886h2M427 885h2M428 884h3M430 883h2M431 882h2M432 881h3M434 880h2M435 879h2M436 878h3M438 877h2M438 877h2M439 876h3M441 875h2M442 874h3M444 873h2M445 872h3M447 871h2M448 870h3M450 869h2M451 868h2M452 867h3M454 866h2M455 865h3M457 864h2M458 863h3M460 862h2M461 861h3M463 860h2M463 860h2M464 859h3M466 858h2M467 857h3M469 856h2M470 855h3M472 854h2M473 853h3M475 852h2M476 851h2M477 850h3M479 849h2M480 848h3M482 847h2M483 846h3M485 845h2M486 844h3M488 843h2M488 843h6M493 842h10M502 841h9M510 840h6M514 840h8M521 839h13M533 838h8M540 837v2M541 836v2M542 834v3M543 833v2M544 832v2M545 831v2M546 829v3M547 828v2M548 827v2M549 825v3M550 824v2M551 823v2M552 822v2M553 820v3M554 819v2M555 818v2M556 817v2M557 815v3M558 814v2M559 813v2M560 811v3M561 810v2M562 809v2M563 808v2M564 806v3M565 805v2M566 804v2M566 804v2M567 803v2M568 802v2M569 801v2M570 800v2M571 799v2M572 797v3M573 796v2M574 795v2M575 794v2M576 793v2M577 792v2M578 791v2M579 790v2M580 789v2M581 788v2M582 787v2M583 786v2M584 785v2M585 783v3M586 782v2M587 781v2M588 780v2M589 779v2M590 778v2M591 777v2M590 778h2M591 777h2M592 776h3M594 775h2M595 774h2M596 773h2M597 772h3M599 771h2M600 770h2M601 769h2M602 768h3M604 767h2M605 766h2M606 765h2M607 764h3M609 763h2M610 762h2M611 761h2M612 760h3M614 759h2M615 758h2M615 758h3M617 757h3M619 756h4M622 755h4M625 754h3M627 753h4M630 752h3M632 751h4M635 750h4M638 749h3M640 748h3M641 748h3M643 749h5M647 750h4M650 751h5M654 752h5M658 753h4M661 754h5M665 755h3M666 755h3M668 756h4M671 757h4M674 758h4M677 759h3M679 760h4M682 761h4M685 762h4M688 763h4M691 764h3M692 764h4M695 765h5M699 766h5M703 767h5M707 768h5M711 769h5M715 770h4M717 770h4M720 771h5M724 772h5M728 773h5M732 774h5M736 775h5M740 776h4M742 776h3M744 777h3M746 778h4M749 779h4M752 780h3M754 781h4M757 782h3M759 783h4M762 784h4M765 785h3M767 786h3M768 786h2M769 787h2M770 788h2M771 789h2M772 790h2M773 791h2M774 792h2M775 793h2M776 794h2M777 795h2M778 796h2M779 797h2M780 798h3M782 799h2M783 800h2M784 801h2M785 802h2M786 803h2M787 804h2M788 805h2M789 806h2M790 807h2M791 808h2M792 809h2M793 810h2M793 810h2M794 811h2M795 812h2M796 813h2M797 814h3M799 815h2M800 816h2M801 817h2M802 818h2M803 819h2M804 820h2M805 821h2M806 822h3M808 823h2M809 824h2M810 825h2M811 826h2M812 827h2M813 828h2M814 829h3M816 830h2M817 831h2M818 832h2M819 833h2M819 833h2M820 834h2M821 835h3M823 836h2M824 837h2M825 838h3M827 839h2M828 840h2M829 841h3M831 842h2M832 843h2M833 844h3M835 845h2M836 846h2M837 847h3M839 848h2M840 849h2M841 850h3M843 851h2M844 852h2M844 852h2M845 853h3M847 854h2M848 855h3M850 856h2M851 857h3M853 858h2M854 859h3M856 860h2M857 861h2M858 862h3M860 863h2M861 864h3M863 865h2M864 866h3M866 867h2M867 868h3M869 869h2M869 869h15M883 868h14M896 867v2M897 866v2M898 865v2M899 863v3M900 862v2M901 861v2M902 860v2M903 859v2M904 858v2M905 856v3M906 855v2M907 854v2M908 853v2M909 852v2M910 851v2M911 850v2M912 848v3M913 847v2M914 846v2M915 845v2M916 844v2M917 843v2M918 841v3M919 840v2M920 839v2M921 838v2M920 839h2M921 838h3M923 837h3M925 836h2M926 835h3M928 834h3M930 833h2M931 832h3M933 831h3M935 830h2M936 829h3M938 828h3M940 827h2M941 826h3M943 825h3M945 824h2M945 824h2M946 823h3M948 822h3M950 821h3M952 820h2M953 819h3M955 818h3M957 817h3M959 816h2M960 815h3M962 814h3M964 813h2M965 812h3M967 811h3M969 810h3M971 809h2M971 809h2M972 808h3M974 807h3M976 806h3M978 805h3M980 804h2M981 803h3M983 802h3M985 801h3M987 800h2M988 799h3M990 798h3M992 797h3M994 796h3M996 795h2M996 795h4M999 794h6M1004 793h7M1010 792h6M1015 791h6M1020 790h4M1022 790h3M1024 789h3M1026 788h3M1028 787h3M1030 786h3M1032 785h3M1034 784h3M1036 783h3M1038 782h3M1040 781h3M1042 780h3M1044 779h3M1046 778h3M1047 778h8M1054 777h13M1066 776h8M1072 776h28M1098 776h4M1101 777h5M1105 778h5M1109 779h5M1113 780h5M1117 781h5M1121 782h4M1123 782h2M1124 783h2M1125 784h2M1126 785h2M1127 786h2M1128 787h2M1129 788h2M1130 789h2M1131 790h2M1132 791h2M1133 792h2M1134 793h2M1135 794h2M1136 795h3M1138 796h2M1139 797h2M1140 798h2M1141 799h2M1142 800h2M1143 801h2M1144 802h2M1145 803h2M1146 804h2M1147 805h2M1148 806h2M1149 807h2M1149 807h2M1150 808h2M1151 809h2M1152 810h2M1153 811h3M1155 812h2M1156 813h2M1157 814h2M1158 815h2M1159 816h2M1160 817h2M1161 818h3M1163 819h2M1164 820h2M1165 821h2M1166 822h2M1167 823h2M1168 824h2M1169 825h3M1171 826h2M1172 827h2M1173 828h2M1174 829h2M1174 829h2M1175 830h3M1177 831h3M1179 832h3M1181 833h3M1183 834h3M1185 835h3M1187 836h3M1189 837h3M1191 838h3M1193 839h3M1195 840h3M1197 841h3M1199 842h2M1199 842h14M1212 843h15M1225 843h3M1227 842h3M1229 841h3M1231 840h3M1233 839h4M1236 838h3M1238 837h3M1240 836h4M1243 835h3M1245 834h3M1247 833h3M1249 832h3M1250 832h2M1251 831h2M1252 830h3M1254 829h2M1255 828h2M1256 827h3M1258 826h2M1259 825h2M1260 824h3M1262 823h2M1263 822h2M1264 821h2M1265 820h3M1267 819h2M1268 818h2M1269 817h3M1271 816h2M1272 815h2M1273 814h3M1275 813h2M1276 812h2M1276 812h4M1279 811h5M1283 810h5M1287 809h5M1291 808h5M1295 807h5M1299 806h4M1301 806h4M1304 805h5M1308 804h5M1312 803h5M1316 802h5M1320 801h5M1324 800h4M1326 800h2M1327 799h2M1328 798h2M1329 797h2M1330 796h2M1331 795h2M1332 794h2M1333 793h2M1334 792h2M1335 791h2M1336 790h2M1337 789h2M1338 788h3M1340 787h2M1341 786h2M1342 785h2M1343 784h2M1344 783h2M1345 782h2M1346 781h2M1347 780h2M1348 779h2M1349 778h2M1350 777h2M1351 776h2M1352 775h2M1352 775h2M1353 774h2M1354 773h3M1356 772h2M1357 771h2M1358 770h3M1360 769h2M1361 768h2M1362 767h3M1364 766h2M1365 765h2M1366 764h3M1368 763h2M1369 762h2M1370 761h3M1372 760h2M1373 759h2M1374 758h3M1376 757h2M1377 756h2M1377 756h15M1391 755h14M1403 755h2M1404 754h3M1406 753h2M1407 752h3M1409 751h3M1411 750h2M1412 749h3M1414 748h2M1415 747h3M1417 746h2M1418 745h3M1420 744h2M1421 743h3M1423 742h3M1425 741h2M1426 740h3M1428 739h2M1428 739h5M1432 738h7M1438 737h7M1444 736h7M1450 735h5M1453 735h5M1457 734h7M1463 733h8M1470 732h7M1476 731h5M1479 731h3M1481 732h3M1483 733h3M1485 734h3M1487 735h4M1490 736h3M1492 737h3M1494 738h4M1497 739h3M1499 740h3M1501 741h3M1503 742h3M1504 742h2M1505 743h3M1507 744h3M1509 745h3M1511 746h3M1513 747h2M1514 748h3M1516 749h3M1518 750h3M1520 751h2M1521 752h3M1523 753h3M1525 754h3M1527 755h3M1529 756h2M1529 756h3M1531 757h5M1535 758h5M1539 759h4M1542 760h5M1546 761h5M1550 762h5M1554 763h3M1555 763h2M1556 764h3M1558 765h2M1559 766h3M1561 767h2M1562 768h3M1564 769h2M1565 770h3M1567 771h2M1568 772h2M1569 773h3M1571 774h2M1572 775h3M1574 776h2M1575 777h3M1577 778h2M1578 779h3M1580 780h2M1580 780h2M1581 781h3M1583 782h2M1584 783h3M1586 784h2M1587 785h2M1588 786h3M1590 787h2M1591 788h3M1593 789h2M1594 790h3M1596 791h2" fill="none" stroke="#FF0000" stroke-width="2"/><rect x="588" y="734" width="5" height="27" fill="#FF8080"/><rect x="587" y="761" width="7" height="27" fill="#FFFF00"/><rect x="586.5" y="787.5" width="8" height="26" fill="#000" stroke="#FFFF00" stroke-width="1"/><rect x="585" y="814" width="11" height="26" fill="#FFFF00"/><rect x="584.5" y="839.5" width="12" height="26" fill="#000" stroke="#FFFF00" stroke-width="1"/><rect x="583" y="892" width="15" height="27" fill="#0000FF"/></g>
<g filter="url(#gs)"><text x="-1" y="10.0" fill="#C0C0C0" font-size="12" textLength="41" lengthAdjust="spacingAndGlyphs">002549</text><text x="43.5" y="10.5" font-size="12" fill="#C0C0C0">凯美特气</text><text x="94" y="10.0" fill="#C0C0C0" font-size="12">(</text><text x="97" y="10.5" font-size="12" fill="#C0C0C0">日线</text><text x="121" y="10.0" fill="#C0C0C0" font-size="12">.</text><text x="124.5" y="10.5" font-size="12" fill="#C0C0C0">前复权</text><text x="160.5" y="10.0" fill="#C0C0C0" font-size="12">)</text><text x="185.8" y="10.0" fill="#FFFFFF" font-size="12" textLength="58" lengthAdjust="spacingAndGlyphs">MA5: 15.84</text><text x="250.8" y="10.0" fill="#FFFF00" font-size="12" textLength="65" lengthAdjust="spacingAndGlyphs">MA10: 16.09</text><text x="323.3" y="10.0" fill="#FF00FF" font-size="12" textLength="64.7" lengthAdjust="spacingAndGlyphs">MA20: 14.23</text><text x="395.3" y="10.0" fill="#00FF00" font-size="12" textLength="65" lengthAdjust="spacingAndGlyphs">MA60: 11.99</text><text x="-0.5" y="24.0" fill="#C0C0C0" font-size="12" textLength="61.5" lengthAdjust="spacingAndGlyphs">2025/10/21/</text><text x="61" y="24.5" font-size="12" fill="#C0C0C0">二</text><text x="77" y="24.5" font-size="12" fill="#00FF00">开</text><text x="89.5" y="24.0" fill="#00FF00" font-size="12" textLength="30" lengthAdjust="spacingAndGlyphs">24.90</text><text x="122.5" y="24.5" font-size="12" fill="#FF3232">高</text><text x="135.5" y="24.0" fill="#FF3232" font-size="12" textLength="30" lengthAdjust="spacingAndGlyphs">25.98</text><text x="168.5" y="24.5" font-size="12" fill="#00FF00">低</text><text x="181.5" y="24.0" fill="#00FF00" font-size="12" textLength="30" lengthAdjust="spacingAndGlyphs">24.65</text><text x="214.5" y="24.5" font-size="12" fill="#FF3232">收</text><text x="227" y="24.0" fill="#FF3232" font-size="12" textLength="29" lengthAdjust="spacingAndGlyphs">25.31</text><text x="260.5" y="24.5" font-size="12" fill="#C0C000">量</text><text x="274.2" y="24.0" fill="#C0C000" font-size="12" textLength="40" lengthAdjust="spacingAndGlyphs">345545</text><text x="318" y="24.5" font-size="12" fill="#C0C0C0">额</text><text x="330.8" y="24.0" fill="#C0C0C0" font-size="12" textLength="21.7" lengthAdjust="spacingAndGlyphs">8.78</text><text x="353.5" y="24.5" font-size="12" fill="#C0C0C0">亿</text><text x="368.5" y="24.5" font-size="12" fill="#FF3232">幅</text><text x="381.3" y="24.0" fill="#FF3232" font-size="12" textLength="66.2" lengthAdjust="spacingAndGlyphs">0.40(1.61%)</text><text x="451" y="24.5" font-size="12" fill="#C0C0C0">换</text><text x="464.2" y="24.0" fill="#C0C0C0" font-size="12" textLength="32.5" lengthAdjust="spacingAndGlyphs">4.99%</text><text x="500" y="24.5" font-size="12" fill="#C0C0C0">流通</text><text x="525" y="24.0" fill="#C0C0C0" font-size="12" textLength="22.5" lengthAdjust="spacingAndGlyphs">6.92</text><text x="548.5" y="24.5" font-size="12" fill="#C0C0C0">亿</text><text x="563.5" y="24.5" font-size="12" fill="#C0C000">大气治理</text><text x="13.5" y="701.5" font-size="12" fill="#C0C0C0">绝杀金牛副</text><text x="79.5" y="701.5" font-size="12" fill="#FFFFFF">顶</text><text x="91" y="701.0" fill="#FFFFFF" font-size="12" textLength="36.5" lengthAdjust="spacingAndGlyphs">: 80.00</text><text x="133" y="701.5" font-size="12" fill="#00FF00">做空线</text><text x="169" y="701.0" fill="#00FF00" font-size="12" textLength="36" lengthAdjust="spacingAndGlyphs">: 33.22</text><text x="211" y="701.5" font-size="12" fill="#FF0000">做多线</text><text x="247" y="701.0" fill="#FF0000" font-size="12" textLength="36.3" lengthAdjust="spacingAndGlyphs">: 46.38</text><text x="288.5" y="701.5" font-size="12" fill="#00FF00">逃顶线</text><text x="324.5" y="701.0" fill="#00FF00" font-size="12" textLength="36.3" lengthAdjust="spacingAndGlyphs">: 71.00</text><text x="366.5" y="701.5" font-size="12" fill="#C0C0C0">强弱分界线</text><text x="426.5" y="701.0" fill="#C0C0C0" font-size="12" textLength="36.5" lengthAdjust="spacingAndGlyphs">: 40.00</text><text x="183.5" y="817.7" font-size="12.5" fill="#00FF00" textLength="24" lengthAdjust="spacingAndGlyphs">清仓</text><text x="818.5" y="817.7" font-size="12.5" fill="#00FF00" textLength="24" lengthAdjust="spacingAndGlyphs">清仓</text><text x="1173.5" y="817.7" font-size="12.5" fill="#00FF00" textLength="24" lengthAdjust="spacingAndGlyphs">清仓</text><text x="1503.5" y="737" font-size="12.5" fill="#00FF00" textLength="24" lengthAdjust="spacingAndGlyphs">减仓</text><text x="592.5" y="896.8" font-size="12" fill="#FFFFFF" textLength="23" lengthAdjust="spacingAndGlyphs">买入</text><text x="613.8" y="914.8" font-size="25.5" font-weight="bold" fill="#C00000" textLength="123" lengthAdjust="spacingAndGlyphs">股海网提供</text><text x="746.3" y="913.6" font-size="24" font-weight="bold" fill="#C00000" textLength="246" lengthAdjust="spacingAndGlyphs">Www.Guhai.Com.CN</text><path d="M1116 674h11l2 2v11h-13z" fill="#0B3D83"/><text x="1116.5" y="685" font-size="12" fill="#FFFFFF">财</text><circle cx="174.7" cy="6" r="6" fill="#606060"/><path d="M171.7 4.5l3 3l3-3" stroke="#D8D8D8" stroke-width="1.3" fill="none"/><circle cx="3.5" cy="697" r="6" fill="#606060"/><path d="M0.5 695.5l3 3l3-3" stroke="#D8D8D8" stroke-width="1.3" fill="none"/></g>
</svg>
</body></html>
